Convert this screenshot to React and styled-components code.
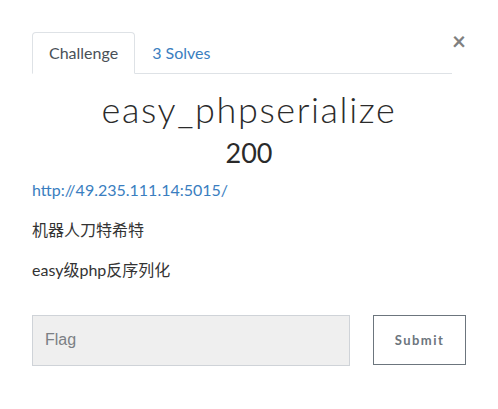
import React from 'react';
import styled, { createGlobalStyle } from 'styled-components';

const GlobalStyle = createGlobalStyle`
  html, body {
    margin: 0;
    padding: 0;
    background: #ffffff;
  }
  body {
    font-family: Lato, "Noto Sans CJK SC", sans-serif;
    font-size: 16px;
    line-height: 1.5;
    color: #212529;
  }
`;

const Modal = styled.div`
  position: relative;
  width: 498px;
  height: 409px;
  box-sizing: border-box;
  padding: 32px 32px 0 32px;
  background: #fff;
`;

const Close = styled.button`
  position: absolute;
  top: 29px;
  right: 32px;
  border: 0;
  background: none;
  padding: 0;
  font-family: Lato, sans-serif;
  font-size: 24px;
  font-weight: 700;
  line-height: 1;
  color: #808080;
  cursor: pointer;
`;

const Tabs = styled.ul`
  display: flex;
  margin: 0 14px 0 0;
  padding: 0;
  list-style: none;
  border-bottom: 1px solid #dee2e6;
`;

const Tab = styled.li`
  margin-bottom: -1px;
  padding: 8px 16px;
  border: 1px solid ${p => (p.active ? '#dee2e6' : 'transparent')};
  border-bottom-color: ${p => (p.active ? '#fff' : 'transparent')};
  border-radius: 4px 4px 0 0;
  background: ${p => (p.active ? '#fff' : 'transparent')};
  color: ${p => (p.active ? '#495057' : '#3a7ec0')};
  font-size: 16px;
  line-height: 24px;
`;

const Title = styled.h2`
  margin: 14px 0 0;
  text-align: center;
  font-family: Lato, sans-serif;
  font-weight: 300;
  font-size: 36px;
  line-height: 1.2;
  letter-spacing: 1.6px;
  color: #2b2b2b;
`;

const Value = styled.h3`
  margin: 6px 0 0;
  text-align: center;
  font-weight: 400;
  font-size: 27px;
  line-height: 1.2;
  color: #2a2a2a;
`;

const Description = styled.div`
  margin-top: 8px;
`;

const Para = styled.p`
  margin: 0 0 16px;
  font-size: 16px;
  line-height: 24px;
  color: #333;
`;

const Link = styled.a`
  color: #3a7ec0;
  text-decoration: none;
`;

const Form = styled.form`
  display: flex;
  gap: 23px;
  margin-top: 33px;
`;

const FlagInput = styled.input`
  width: 318px;
  height: 51px;
  box-sizing: border-box;
  padding: 0 12px;
  border: 1px solid #cfd3d8;
  border-radius: 0;
  background: #efefef;
  font-family: "Liberation Sans", Arial, sans-serif;
  font-size: 16px;
  color: #495057;
  outline: none;

  &::placeholder {
    color: #7b7f84;
  }
`;

const SubmitButton = styled.button`
  width: 93px;
  height: 50px;
  box-sizing: border-box;
  border: 1px solid #6c757d;
  border-radius: 0;
  background: #fff;
  font-family: Lato, sans-serif;
  font-size: 13px;
  font-weight: 700;
  letter-spacing: 1.5px;
  color: #6c757d;
  cursor: pointer;
`;

export default function App() {
  return (
    <>
      <GlobalStyle />
      <Modal>
        <Close aria-label="Close">×</Close>
        <Tabs>
          <Tab active>Challenge</Tab>
          <Tab>3 Solves</Tab>
        </Tabs>
        <Title>easy_phpserialize</Title>
        <Value>200</Value>
        <Description>
          <Para>
            <Link href="#">http://49.235.111.14:5015/</Link>
          </Para>
          <Para>机器人刀特希特</Para>
          <Para>easy级php反序列化</Para>
        </Description>
        <Form onSubmit={e => e.preventDefault()}>
          <FlagInput placeholder="Flag" />
          <SubmitButton type="submit">Submit</SubmitButton>
        </Form>
      </Modal>
    </>
  );
}
